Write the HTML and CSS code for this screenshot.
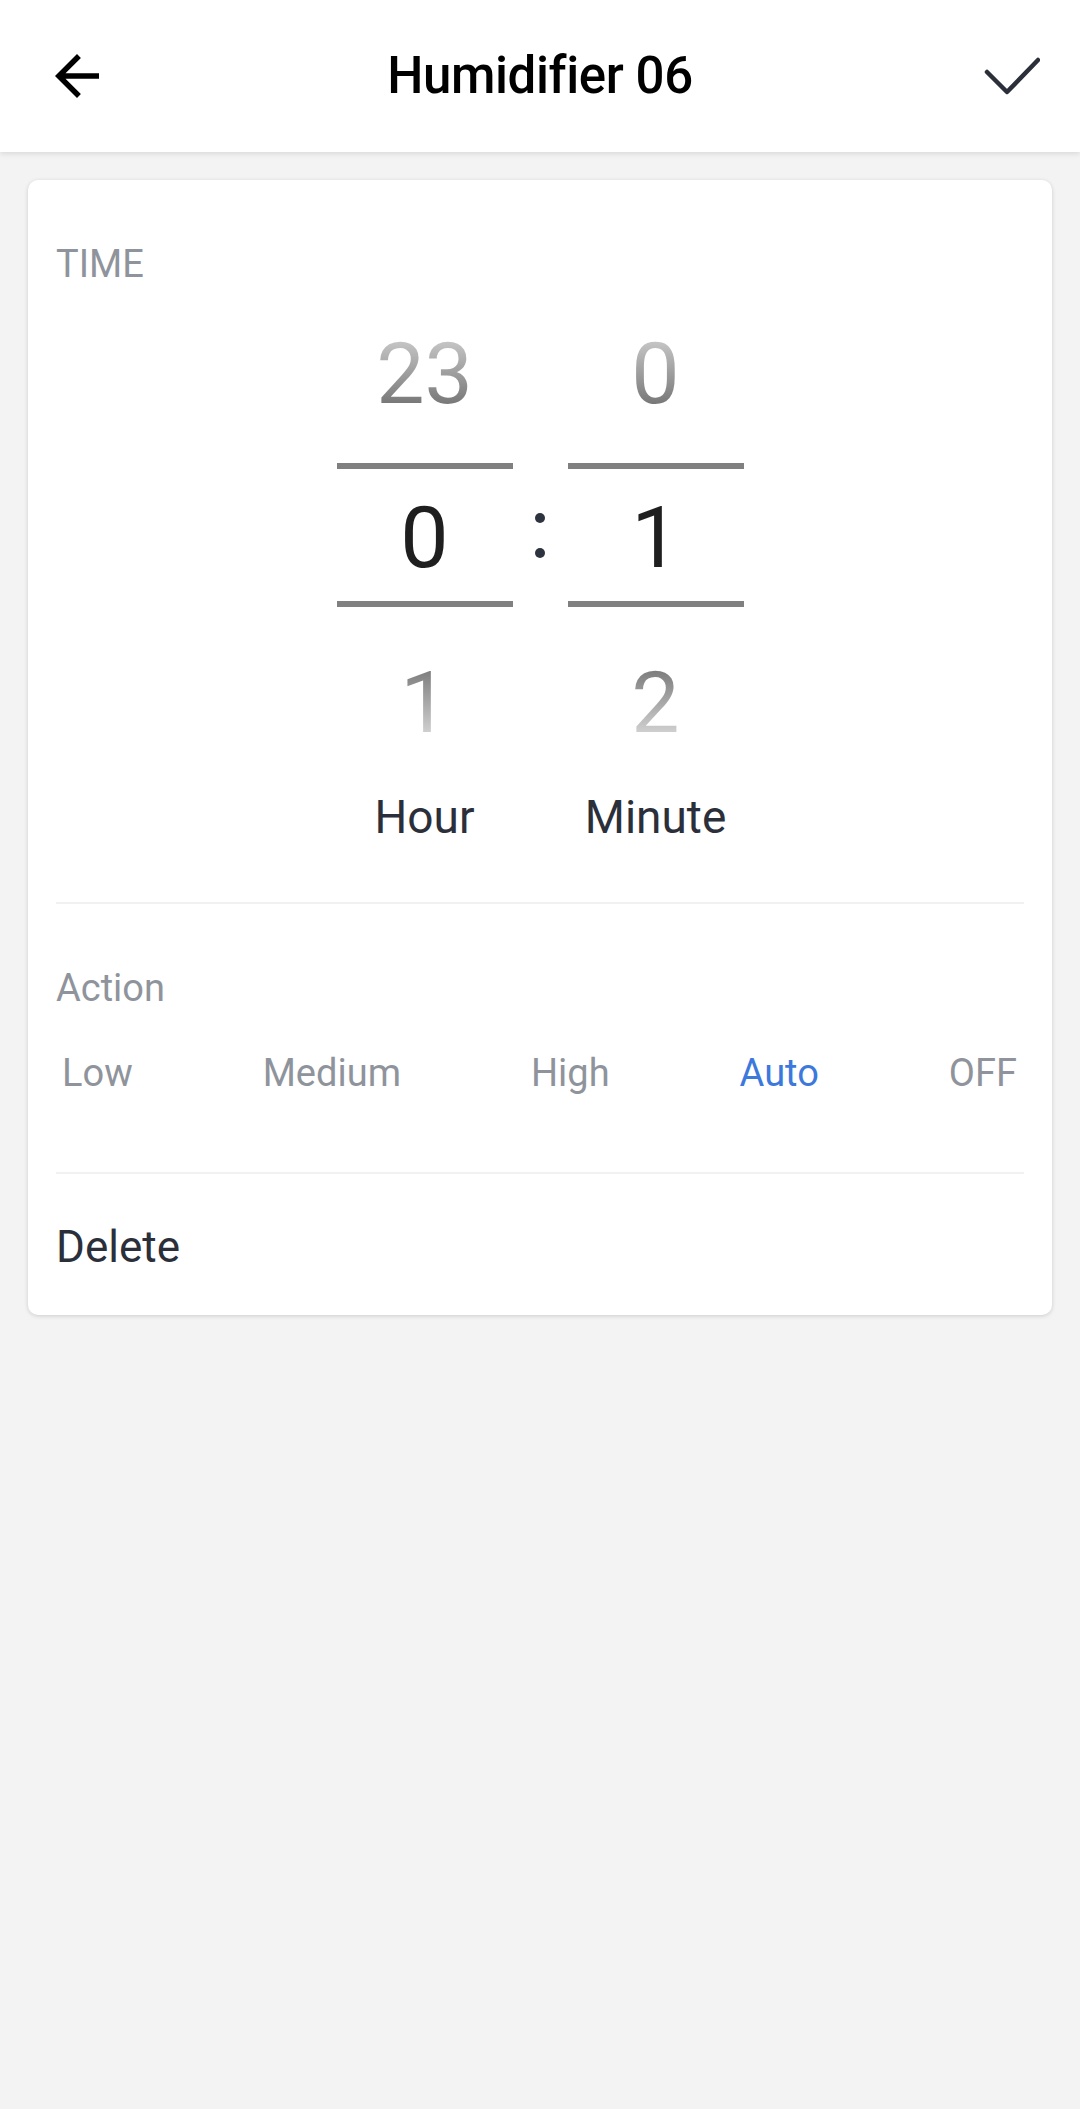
FILE: index.html
```html
<!DOCTYPE html>
<html lang="en">
<head>
<meta charset="utf-8">
<title>Humidifier 06</title>
<link rel="stylesheet" href="styles.css">
</head>
<body>
<header class="topbar">
  <div class="topbar-side">
    <svg class="icon-back" viewBox="0 0 24 24" width="66" height="66" aria-hidden="true">
      <path d="M20 11H7.83l5.59-5.59L12 4l-8 8 8 8 1.41-1.41L7.83 13H20v-2z" fill="#000"/>
    </svg>
  </div>
  <h1 class="title">Humidifier 06</h1>
  <div class="topbar-side right">
    <svg class="icon-check" viewBox="0 0 60 60" width="60" height="60" aria-hidden="true">
      <path d="M7 26 L27 46 L58 14" fill="none" stroke="#2b2f3a" stroke-width="4.5" stroke-linecap="round" stroke-linejoin="round"/>
    </svg>
  </div>
</header>

<main class="card">
  <div class="section-label time-label">TIME</div>

  <div class="picker">
    <div class="picker-col">
      <div class="cell prev"><span class="digit fade-up">23</span></div>
      <div class="rule"></div>
      <div class="cell cur"><span class="digit">0</span></div>
      <div class="rule"></div>
      <div class="cell next"><span class="digit fade-down">1</span></div>
      <div class="unit">Hour</div>
    </div>
    <div class="colon"><span class="dot"></span><span class="dot"></span></div>
    <div class="picker-col">
      <div class="cell prev"><span class="digit fade-up">0</span></div>
      <div class="rule"></div>
      <div class="cell cur"><span class="digit">1</span></div>
      <div class="rule"></div>
      <div class="cell next"><span class="digit fade-down">2</span></div>
      <div class="unit">Minute</div>
    </div>
  </div>

  <div class="divider first"></div>

  <div class="section-label action-label">Action</div>
  <div class="options">
    <span class="option">Low</span>
    <span class="option">Medium</span>
    <span class="option">High</span>
    <span class="option active">Auto</span>
    <span class="option">OFF</span>
  </div>

  <div class="divider second"></div>

  <div class="delete">Delete</div>
</main>
</body>
</html>
```

FILE: styles.css
```css
* { box-sizing: border-box; }

html, body {
  margin: 0;
  padding: 0;
}

body {
  background: #f3f3f3;
  font-family: Roboto, "Liberation Sans", sans-serif;
  min-height: 2109px;
}

.topbar {
  height: 152px;
  background: #ffffff;
  display: grid;
  grid-template-columns: 1fr auto 1fr;
  align-items: center;
  box-shadow: 0 2px 5px rgba(0, 0, 0, 0.10);
  position: relative;
  z-index: 1;
}

.topbar-side {
  display: flex;
  align-items: center;
}

.topbar-side.right {
  justify-content: flex-end;
}

.icon-back {
  display: block;
  margin-left: 44px;
}

.icon-check {
  display: block;
  margin-right: 40px;
}

.title {
  margin: 0;
  font-family: Roboto, "Liberation Sans", sans-serif;
  font-weight: 500;
  font-size: 51px;
  line-height: 60px;
  color: #000;
  letter-spacing: -0.4px;
}

.card {
  display: block;
  margin: 28px 28px 0 28px;
  background: #ffffff;
  border-radius: 10px;
  box-shadow: 0 1px 4px rgba(0, 0, 0, 0.16);
  padding: 62px 28px 43px 28px;
}

.section-label {
  font-size: 38px;
  line-height: 44px;
  color: #8f949c;
}

.picker {
  display: flex;
  justify-content: center;
  align-items: flex-start;
}

.picker-col {
  width: 176px;
  display: flex;
  flex-direction: column;
  align-items: center;
}

.cell {
  width: 100%;
  display: flex;
  align-items: center;
  justify-content: center;
}

.cell.prev { height: 177px; }
.cell.cur { height: 132px; padding-top: 6px; }
.cell.next { height: 174px; padding-top: 18px; }

.digit {
  display: block;
  font-size: 86px;
  line-height: 1.172;
  color: #1f1f1f;
}

.fade-up {
  background: linear-gradient(to bottom, #c4c4c4 18%, #777777 80%);
  -webkit-background-clip: text;
  background-clip: text;
  color: transparent;
}

.fade-down {
  background: linear-gradient(to bottom, #7e7e7e 18%, #d0d0d0 80%);
  -webkit-background-clip: text;
  background-clip: text;
  color: transparent;
}

.rule {
  width: 100%;
  height: 6px;
  background: #808080;
}

.unit {
  margin-top: 9px;
  font-size: 46px;
  line-height: 54px;
  color: #2b2f3a;
}

.colon {
  width: 55px;
  margin-top: 183px;
  height: 132px;
  display: flex;
  flex-direction: column;
  align-items: center;
  justify-content: center;
  gap: 25px;
}

.dot {
  display: block;
  width: 10px;
  height: 10px;
  border-radius: 50%;
  background: #2e3340;
}

.divider {
  height: 2px;
  background: #f1f1f1;
}

.divider.first { margin-top: 58px; }

.action-label { margin-top: 62px; }

.options {
  margin-top: 41px;
  display: flex;
  justify-content: space-between;
  padding: 0 7px 0 6px;
  font-size: 38px;
  line-height: 44px;
  color: #8f949c;
}

.option.active { color: #3d78dc; }

.divider.second { margin-top: 77px; }

.delete {
  margin-top: 48px;
  font-size: 44px;
  line-height: 50px;
  color: #2b2f3a;
}
```
